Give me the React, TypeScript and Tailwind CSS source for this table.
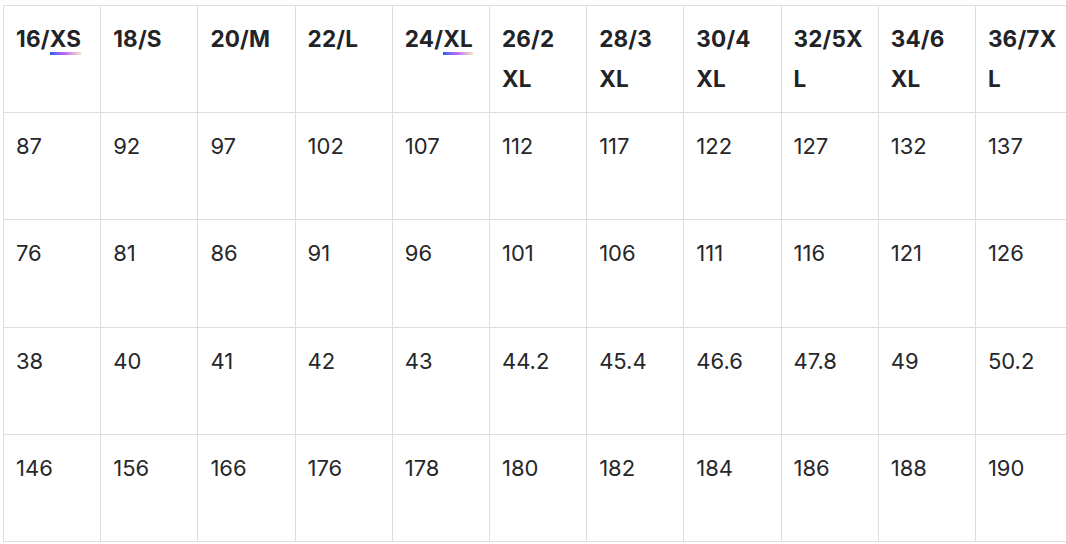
import React from 'react';

// size chart columns: header lines, underlined part
const sizes: { lines: string[]; mark?: string }[] = [
    { lines: ['16/'], mark: 'XS' },
    { lines: ['18/S'] },
    { lines: ['20/M'] },
    { lines: ['22/L'] },
    { lines: ['24/'], mark: 'XL' },
    { lines: ['26/2', 'XL'] },
    { lines: ['28/3', 'XL'] },
    { lines: ['30/4', 'XL'] },
    { lines: ['32/5X', 'L'] },
    { lines: ['34/6', 'XL'] },
    { lines: ['36/7X', 'L'] },
];

const rows: string[][] = [
    ['87', '92', '97', '102', '107', '112', '117', '122', '127', '132', '137'],
    ['76', '81', '86', '91', '96', '101', '106', '111', '116', '121', '126'],
    ['38', '40', '41', '42', '43', '44.2', '45.4', '46.6', '47.8', '49', '50.2'],
    ['146', '156', '166', '176', '178', '180', '182', '184', '186', '188', '190'],
];

const Mark: React.FC<{ text: string }> = ({ text }) => (
    <span className="relative inline-block">
        {text}
        <span className="absolute left-0 right-0 bottom-[4px] h-[3px] bg-gradient-to-r from-[#1f5af6] via-[#c46af2] to-[#f3e4c4]" />
    </span>
);

export default function App() {
    return (
        <div className="w-[1066px] h-[544px] overflow-hidden bg-white pt-[5px] pl-[3px] text-[#222327]" style={{ fontFamily: 'Inter, "Noto Sans", sans-serif' }}>
            <div className="grid grid-cols-[repeat(11,97.2px)] border-l border-t border-[#dedede] w-max">
                {sizes.map((s, i) => (
                    <div key={i} className="h-[107.2px] border-r border-b border-[#dedede] px-[12px] py-[13px] text-[22.5px] leading-[40px] font-bold tracking-[0.2px]">
                        {s.lines.map((l, j) => (
                            <div key={j}>
                                {l}
                                {j === 0 && s.mark && <Mark text={s.mark} />}
                            </div>
                        ))}
                    </div>
                ))}
                {rows.map((r, ri) =>
                    r.map((v, ci) => (
                        <div key={`${ri}-${ci}`} className="h-[107.2px] border-r border-b border-[#dedede] px-[12px] py-[13px] text-[22px] leading-[40px] text-[#26272b]">
                            {v}
                        </div>
                    ))
                )}
            </div>
        </div>
    );
}
